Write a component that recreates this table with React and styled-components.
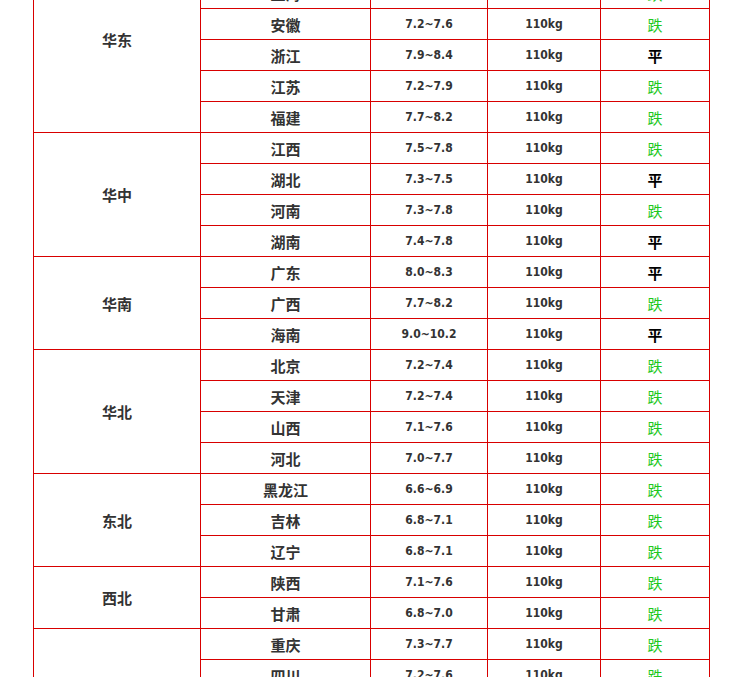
import styled, { createGlobalStyle } from 'styled-components';

const GlobalStyle = createGlobalStyle`
  html, body {
    margin: 0;
    padding: 0;
    background: #fff;
    overflow: hidden;
  }
`;

const colWidths = [167, 170, 117, 113, 109];

const regions = [
  {
    name: '华东',
    rows: [
      ['山东', '7.3~7.7', '跌'],
      ['上海', '7.6~8.0', '跌'],
      ['安徽', '7.2~7.6', '跌'],
      ['浙江', '7.9~8.4', '平'],
      ['江苏', '7.2~7.9', '跌'],
      ['福建', '7.7~8.2', '跌'],
    ],
  },
  {
    name: '华中',
    rows: [
      ['江西', '7.5~7.8', '跌'],
      ['湖北', '7.3~7.5', '平'],
      ['河南', '7.3~7.8', '跌'],
      ['湖南', '7.4~7.8', '平'],
    ],
  },
  {
    name: '华南',
    rows: [
      ['广东', '8.0~8.3', '平'],
      ['广西', '7.7~8.2', '跌'],
      ['海南', '9.0~10.2', '平'],
    ],
  },
  {
    name: '华北',
    rows: [
      ['北京', '7.2~7.4', '跌'],
      ['天津', '7.2~7.4', '跌'],
      ['山西', '7.1~7.6', '跌'],
      ['河北', '7.0~7.7', '跌'],
    ],
  },
  {
    name: '东北',
    rows: [
      ['黑龙江', '6.6~6.9', '跌'],
      ['吉林', '6.8~7.1', '跌'],
      ['辽宁', '6.8~7.1', '跌'],
    ],
  },
  {
    name: '西北',
    rows: [
      ['陕西', '7.1~7.6', '跌'],
      ['甘肃', '6.8~7.0', '跌'],
    ],
  },
  {
    name: '西南',
    rows: [
      ['重庆', '7.3~7.7', '跌'],
      ['四川', '7.2~7.6', '跌'],
      ['云南', '7.4~7.8', '跌'],
      ['贵州', '7.3~7.8', '跌'],
    ],
  },
];

function App() {
  return (
    <>
      <GlobalStyle />
      <Page>
        <PriceTable>
          <colgroup>
            {colWidths.map((w, i) => (
              <Col key={i} $w={w} />
            ))}
          </colgroup>
          <tbody>
            {regions.map(region =>
              region.rows.map(([prov, price, trend], i) => (
                <tr key={region.name + prov}>
                  {i === 0 && (
                    <TextCell rowSpan={region.rows.length}>{region.name}</TextCell>
                  )}
                  <TextCell>{prov}</TextCell>
                  <NumCell>{price}</NumCell>
                  <NumCell>110kg</NumCell>
                  <TrendCell $down={trend === '跌'}>{trend}</TrendCell>
                </tr>
              ))
            )}
          </tbody>
        </PriceTable>
      </Page>
    </>
  );
}

export default App;

const Page = styled.div`
  padding-left: 33px;
  margin-top: -54px;
`;

const Col = styled.col`
  width: ${p => p.$w}px;
`;

const PriceTable = styled.table`
  border-collapse: collapse;
  table-layout: fixed;
  width: 677px;
  border: 1px solid #d80000;

  td {
    border: 1px solid #d80000;
    height: 30px;
    padding: 0;
    text-align: center;
    vertical-align: middle;
  }
`;

const TextCell = styled.td`
  font-family: 'Noto Sans CJK SC', sans-serif;
  font-size: 15px;
  font-weight: 700;
  color: #333;
`;

const NumCell = styled.td`
  font-family: 'DejaVu Sans Condensed', 'DejaVu Sans', sans-serif;
  font-stretch: condensed;
  font-size: 12px;
  font-weight: 700;
  color: #333;
`;

const TrendCell = styled.td`
  font-family: 'Noto Sans CJK SC', sans-serif;
  font-size: 15px;
  font-weight: ${p => (p.$down ? 400 : 700)};
  color: ${p => (p.$down ? '#1ec81e' : '#000')};
`;
